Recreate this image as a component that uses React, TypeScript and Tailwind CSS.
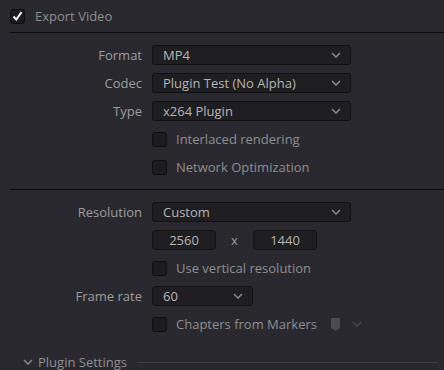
import type React from "react";

function Chevron({ className = "" }: { className?: string }) {
  return (
    <svg width="10" height="6" viewBox="0 0 10 6" className={className} fill="none">
      <path d="M1 1l4 4 4-4" stroke="currentColor" strokeWidth="1.5" />
    </svg>
  );
}

function Checkbox({ checked = false }: { checked?: boolean }) {
  return (
    <div className="w-[15px] h-[15px] rounded-[3px] border border-[#0e0e10] bg-[#1c1c1f] flex items-center justify-center shrink-0">
      {checked && (
        <svg width="11" height="10" viewBox="0 0 11 10" fill="none">
          <path d="M1.5 5.5l2.8 3L9.5 1.2" stroke="#f2f2f2" strokeWidth="2" />
        </svg>
      )}
    </div>
  );
}

function Select({ value, width = "w-[199px]" }: { value: string; width?: string }) {
  return (
    <div
      className={`${width} h-[20px] rounded-[3px] border border-[#111113] bg-[#1e1e21] flex items-center justify-between pl-[10px] pr-[9px] text-[#b4b4b4]`}
    >
      <span>{value}</span>
      <Chevron className="text-[#8a8a8e]" />
    </div>
  );
}

function Row({ label, children }: { label?: string; children: React.ReactNode }) {
  return (
    <div className="h-[28px] flex items-center">
      <div className="w-[142px] text-right text-[#9d9d9d]">{label}</div>
      <div className="ml-[10px] flex items-center">{children}</div>
    </div>
  );
}

function CheckRow({ label, children }: { label: string; children?: React.ReactNode }) {
  return (
    <Row>
      <Checkbox />
      <span className="ml-[9px] text-[#8e8e8e]">{label}</span>
      {children}
    </Row>
  );
}

export default function App() {
  return (
    <div
      className="w-[444px] h-[370px] overflow-hidden bg-[#28282e] text-[13px] leading-none"
      style={{ fontFamily: '"Open Sans", "Noto Sans", sans-serif' }}
    >
      <div className="h-[32px] flex items-center pl-[10px]">
        <Checkbox checked />
        <span className="ml-[10px] text-[#8e8e8e]">Export Video</span>
      </div>
      <div className="ml-[10px] h-px bg-[#0c0c0e]" />

      <div className="pt-[8px]">
        <Row label="Format">
          <Select value="MP4" />
        </Row>
        <Row label="Codec">
          <Select value="Plugin Test (No Alpha)" />
        </Row>
        <Row label="Type">
          <Select value="x264 Plugin" />
        </Row>
        <CheckRow label="Interlaced rendering" />
        <CheckRow label="Network Optimization" />
      </div>

      <div className="mt-[8px] ml-[10px] h-px bg-[#0c0c0e]" />

      <div className="pt-[8px]">
        <Row label="Resolution">
          <Select value="Custom" />
        </Row>
        <Row>
          <div className="w-[64px] h-[20px] rounded-[3px] border border-[#111113] bg-[#1e1e21] flex items-center justify-center text-[#b4b4b4]">
            2560
          </div>
          <span className="w-[37px] text-center text-[#9d9d9d]">x</span>
          <div className="w-[64px] h-[20px] rounded-[3px] border border-[#111113] bg-[#1e1e21] flex items-center justify-center text-[#b4b4b4]">
            1440
          </div>
        </Row>
        <CheckRow label="Use vertical resolution" />
        <Row label="Frame rate">
          <Select value="60" width="w-[101px]" />
        </Row>
        <CheckRow label="Chapters from Markers">
          <svg width="9" height="13" viewBox="0 0 9 13" className="ml-[14px]">
            <path d="M1 0h7a1 1 0 0 1 1 1v9l-4.5 3L0 10V1a1 1 0 0 1 1-1z" fill="#4b4b51" />
          </svg>
          <Chevron className="ml-[12px] text-[#47474d]" />
        </CheckRow>
      </div>

      <div className="mt-[10px] h-[28px] flex items-center pl-[23px]">
        <Chevron className="text-[#8a8a8e]" />
        <span className="ml-[5px] text-[#8e8e8e]">Plugin Settings</span>
        <div className="ml-[10px] mr-[6px] flex-1 h-px bg-[#3c3c42]" />
      </div>
    </div>
  );
}
